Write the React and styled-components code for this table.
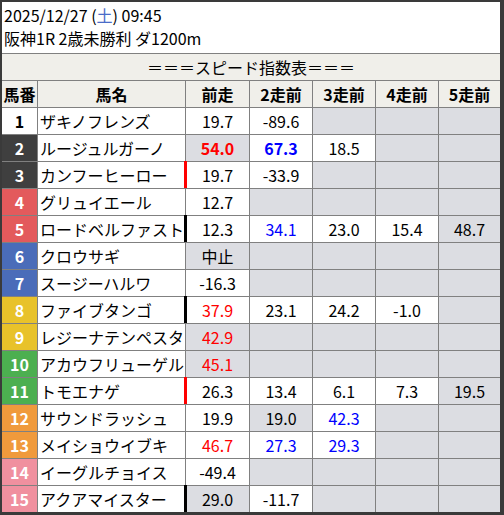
import React from "react";
import styled, { createGlobalStyle, css } from "styled-components";

const Global = createGlobalStyle`
  html, body { margin: 0; padding: 0; background: #ffffff; }
  body { font-family: "Noto Sans CJK JP", "Noto Sans", sans-serif; }
`;

const Frame = styled.div`
  width: 504px;
  height: 515px;
  box-sizing: border-box;
  border-style: solid;
  border-color: #3a3a3a;
  border-width: 2px 4px 3px 2px;
  background: #808080;
  display: flex;
  flex-direction: column;
  gap: 1px;
  font-family: "Noto Sans CJK JP", "Noto Sans", sans-serif;
  color: #000;
`;

const Info = styled.div`
  background: #ffffff;
  height: 51px;
  box-sizing: border-box;
  padding: 2px 2px;
  font-size: 16px;
  line-height: 23px;
`;

const Line = styled.div`
  white-space: nowrap;
`;

const Sat = styled.span`
  color: #4a6cc8;
`;

const Grid = styled.div`
  display: grid;
  grid-template-columns: 35px 147px 63px 62px 62px 62px 61px;
  grid-auto-rows: 26px;
  gap: 1px;
  background: #808080;
`;

const Title = styled.div`
  grid-column: 1 / -1;
  background: #f0efea;
  display: flex;
  align-items: center;
  justify-content: center;
  font-size: 16px;
`;

const Head = styled.div`
  background: #f0efea;
  display: flex;
  align-items: center;
  justify-content: center;
  font-size: 16px;
  font-weight: 700;
`;

const WAKU = {
  1: { bg: "#ffffff", fg: "#000000" },
  2: { bg: "#3f3f3f", fg: "#ffffff" },
  3: { bg: "#e35a5c", fg: "#ffffff" },
  4: { bg: "#4a6cb9", fg: "#ffffff" },
  5: { bg: "#e8c22a", fg: "#ffffff" },
  6: { bg: "#4caf50", fg: "#ffffff" },
  7: { bg: "#f09a3c", fg: "#ffffff" },
  8: { bg: "#f0909f", fg: "#ffffff" },
};

const Num = styled.div`
  background: ${(p) => WAKU[p.$waku].bg};
  color: ${(p) => WAKU[p.$waku].fg};
  display: flex;
  align-items: center;
  justify-content: center;
  font-size: 16px;
  font-weight: 700;
`;

const Name = styled.div`
  background: #ffffff;
  display: flex;
  align-items: center;
  padding-left: 2px;
  font-size: 16px;
  white-space: nowrap;
  overflow: hidden;
`;

const COLORS = { r: "#ff0000", b: "#0000ff" };
const BARS = { r: "#ff0000", k: "#000000" };

const Cell = styled.div`
  position: relative;
  background: ${(p) => (p.$gray ? "#dcdde2" : "#ffffff")};
  color: ${(p) => (p.$c ? COLORS[p.$c] : "#000000")};
  font-weight: ${(p) => (p.$bold ? 700 : 400)};
  display: flex;
  align-items: center;
  justify-content: center;
  font-size: 16px;
  ${(p) =>
    p.$bar &&
    css`
      &::before {
        content: "";
        position: absolute;
        left: -2px;
        top: -1px;
        bottom: 0;
        width: 3px;
        background: ${BARS[p.$bar]};
      }
    `}
`;

const W = (v, c, bold) => ({ v, g: false, c, bold });
const G = (v = "", c, bold) => ({ v, g: true, c, bold });

const rows = [
  { n: 1, w: 1, name: "ザキノフレンズ", cells: [W("19.7"), W("-89.6"), G(), G(), G()] },
  { n: 2, w: 2, name: "ルージュルガーノ", cells: [G("54.0", "r", true), W("67.3", "b", true), W("18.5"), G(), G()] },
  { n: 3, w: 2, name: "カンフーヒーロー", bar: "r", cells: [W("19.7"), W("-33.9"), G(), G(), G()] },
  { n: 4, w: 3, name: "グリュイエール", cells: [W("12.7"), G(), G(), G(), G()] },
  { n: 5, w: 3, name: "ロードベルファスト", bar: "k", cells: [W("12.3"), W("34.1", "b"), W("23.0"), W("15.4"), G("48.7")] },
  { n: 6, w: 4, name: "クロウサギ", cells: [G("中止"), G(), G(), G(), G()] },
  { n: 7, w: 4, name: "スージーハルワ", cells: [W("-16.3"), G(), G(), G(), G()] },
  { n: 8, w: 5, name: "ファイブタンゴ", bar: "k", cells: [W("37.9", "r"), W("23.1"), W("24.2"), W("-1.0"), G()] },
  { n: 9, w: 5, name: "レジーナテンペスタ", cells: [G("42.9", "r"), G(), G(), G(), G()] },
  { n: 10, w: 6, name: "アカウフリューゲル", cells: [G("45.1", "r"), G(), G(), G(), G()] },
  { n: 11, w: 6, name: "トモエナゲ", bar: "r", cells: [W("26.3"), W("13.4"), W("6.1"), W("7.3"), G("19.5")] },
  { n: 12, w: 7, name: "サウンドラッシュ", cells: [W("19.9"), G("19.0"), W("42.3", "b"), G(), G()] },
  { n: 13, w: 7, name: "メイショウイブキ", cells: [W("46.7", "r"), W("27.3", "b"), W("29.3", "b"), G(), G()] },
  { n: 14, w: 8, name: "イーグルチョイス", cells: [W("-49.4"), G(), G(), G(), G()] },
  { n: 15, w: 8, name: "アクアマイスター", bar: "k", cells: [G("29.0"), W("-11.7"), G(), G(), G()] },
];

const heads = ["馬番", "馬名", "前走", "2走前", "3走前", "4走前", "5走前"];

export default function App() {
  return (
    <>
      <Global />
      <Frame>
        <Info>
          <Line>
            2025/12/27 (<Sat>土</Sat>) 09:45
          </Line>
          <Line>阪神1R 2歳未勝利 ダ1200m</Line>
        </Info>
        <Grid>
          <Title>＝＝＝スピード指数表＝＝＝</Title>
          {heads.map((h) => (
            <Head key={h}>{h}</Head>
          ))}
          {rows.map((r) => (
            <React.Fragment key={r.n}>
              <Num $waku={r.w}>{r.n}</Num>
              <Name>{r.name}</Name>
              {r.cells.map((c, i) => (
                <Cell
                  key={i}
                  $gray={c.g}
                  $c={c.c}
                  $bold={c.bold}
                  $bar={i === 0 ? r.bar : undefined}
                >
                  {c.v}
                </Cell>
              ))}
            </React.Fragment>
          ))}
        </Grid>
      </Frame>
    </>
  );
}
